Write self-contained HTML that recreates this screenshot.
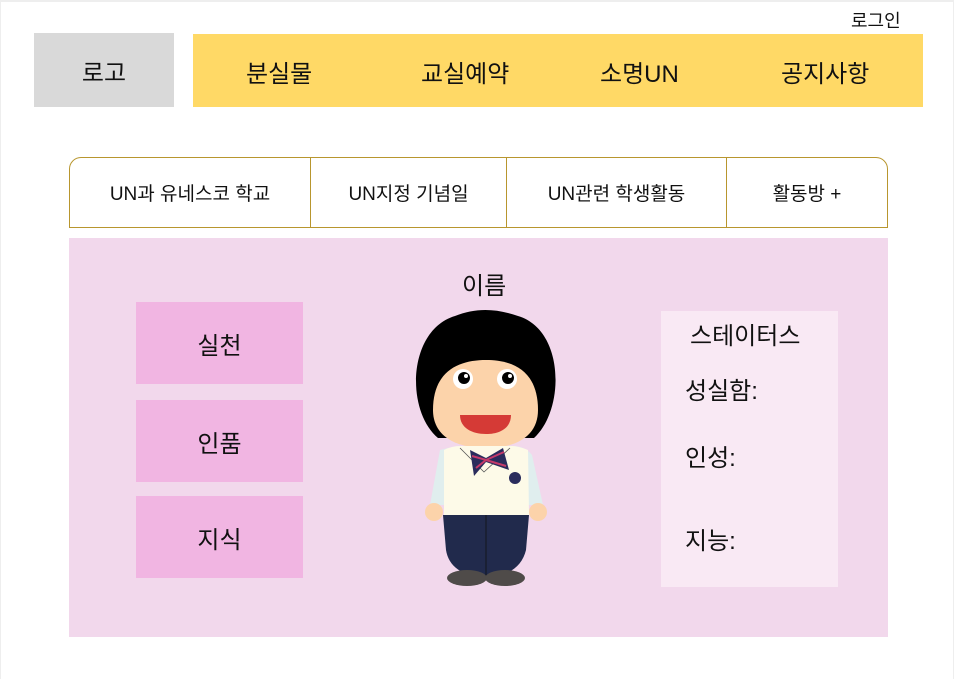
<!DOCTYPE html>
<html><head><meta charset="utf-8"><style>
*{margin:0;padding:0;box-sizing:border-box}
body{width:954px;height:679px;background:#fff;font-family:"Liberation Sans","Noto Sans CJK KR",sans-serif;color:#111;position:relative;overflow:hidden}
.a{position:absolute}
.c{display:flex;align-items:center;justify-content:center}
</style></head><body>
<div class="a" style="left:0;top:0;width:954px;height:679px;border-top:2px solid #eee;border-left:1px solid #eee;border-right:1px solid #eee"></div>
<div class="a" style="left:851px;top:7px;font-size:18px">로그인</div>
<div class="a c" style="left:34px;top:33px;width:140px;height:74px;background:#d9d9d9;font-size:24px">로고</div>
<div class="a" style="left:193px;top:34px;width:730px;height:73px;background:#ffd966"></div>
<div class="a" style="left:246px;top:54px;font-size:24px">분실물</div>
<div class="a" style="left:421px;top:54px;font-size:24px">교실예약</div>
<div class="a" style="left:600px;top:54px;font-size:24px">소명UN</div>
<div class="a" style="left:781px;top:54px;font-size:24px">공지사항</div>

<div class="a" style="left:69px;top:157px;width:819px;height:71px;border:1px solid #b8962e;border-radius:12px 12px 0 0;display:flex;font-size:19px">
<div class="c" style="width:241px;border-right:1px solid #b8962e">UN과 유네스코 학교</div>
<div class="c" style="width:196px;border-right:1px solid #b8962e">UN지정 기념일</div>
<div class="c" style="width:220px;border-right:1px solid #b8962e">UN관련 학생활동</div>
<div class="c" style="flex:1">활동방 +</div>
</div>

<div class="a" style="left:69px;top:238px;width:819px;height:399px;background:#f2d8ec"></div>
<div class="a c" style="left:136px;top:302px;width:167px;height:82px;background:#f1b5e2;font-size:24px">실천</div>
<div class="a c" style="left:136px;top:400px;width:167px;height:82px;background:#f1b5e2;font-size:24px">인품</div>
<div class="a c" style="left:136px;top:496px;width:167px;height:82px;background:#f1b5e2;font-size:24px">지식</div>
<div class="a" style="left:462px;top:266px;font-size:24px">이름</div>
<div class="a" style="left:661px;top:311px;width:177px;height:276px;background:#f9e9f4"></div>
<div class="a" style="left:690px;top:316px;font-size:24px">스테이터스</div>
<div class="a" style="left:685px;top:371px;font-size:24px">성실함:</div>
<div class="a" style="left:685px;top:438px;font-size:24px">인성:</div>
<div class="a" style="left:685px;top:521px;font-size:24px">지능:</div>

<svg class="a" style="left:400px;top:300px" width="170" height="300" viewBox="0 0 170 300">
<path d="M38 138 C5 110 8 30 55 16 C75 8 95 8 118 16 C165 30 165 110 134 138 Z" fill="#000"/>
<path d="M33 110 C33 70 60 60 86 60 C112 60 138 70 138 110 C138 135 118 148 86 148 C54 148 33 135 33 110 Z" fill="#fcd3aa"/>
<circle cx="63" cy="79" r="10" fill="#fff"/><circle cx="64" cy="78" r="6" fill="#000"/><circle cx="66" cy="76" r="2" fill="#fff"/>
<circle cx="107" cy="79" r="10" fill="#fff"/><circle cx="108" cy="78" r="6" fill="#000"/><circle cx="110" cy="76" r="2" fill="#fff"/>
<path d="M60 115 L111 115 C111 128 100 134 86 134 C72 134 60 128 60 115 Z" fill="#d53a36"/>
<path d="M40 150 Q55 146 60 146 L112 146 Q125 146 132 155 L143 205 L30 205 Z" fill="#e0eeee"/>
<path d="M44 205 L44 150 Q52 146 60 146 L112 146 Q118 146 128 150 L129 215 L44 215 Z" fill="#fdfae8"/>
<path d="M60 148 L84 172 L110 148" fill="none" stroke="#555" stroke-width="0.8"/>
<path d="M70 150 L86 158 L103 148 L109 170 L86 162 L74 176 Z" fill="#2a2c5c"/>
<path d="M72 156 L86 160 L104 152 M76 168 L86 160 L106 166" stroke="#c43a6a" stroke-width="2" fill="none"/>
<circle cx="115" cy="178" r="6" fill="#2a2c5c"/>
<circle cx="34" cy="212" r="9" fill="#fcd3aa"/><circle cx="138" cy="212" r="9" fill="#fcd3aa"/>
<path d="M43 215 L129 215 L126 250 Q120 275 86 278 Q50 275 46 250 Z" fill="#212a4c"/>
<line x1="86" y1="215" x2="86" y2="278" stroke="#111" stroke-width="0.8"/>
<ellipse cx="67" cy="278" rx="20" ry="8" fill="#4f4b49"/><ellipse cx="105" cy="278" rx="20" ry="8" fill="#4f4b49"/>
</svg>
</body></html>
